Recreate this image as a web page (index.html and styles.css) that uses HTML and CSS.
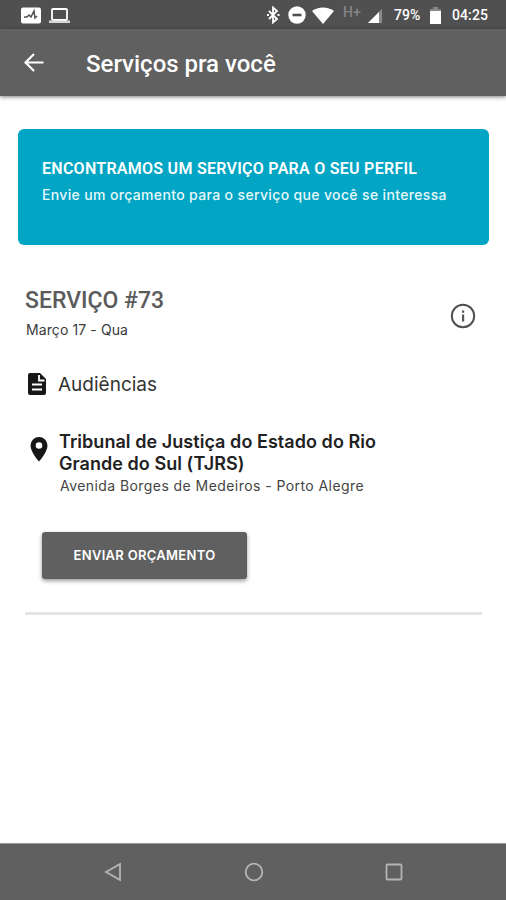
FILE: index.html
```html
<!DOCTYPE html>
<html lang="pt-BR">
<head>
<meta charset="utf-8">
<title>Serviços pra você</title>
<link rel="stylesheet" href="styles.css">
</head>
<body>
<div class="status">
  <svg class="activity" width="20" height="17" viewBox="0 0 20 17"><rect width="20" height="16" y=".5" rx="2" fill="#fff"/><path d="M3 10h3l2-2 2 2 3-6 1 7 2-2" fill="none" stroke="#505050" stroke-width="1.5"/></svg>
  <svg class="laptop" width="22" height="17" viewBox="0 0 22 17"><rect x="3" y="2" width="15" height="11" rx="1" fill="none" stroke="#fff" stroke-width="1.8"/><path d="M0 13.500h21v2.500H0z" fill="#d8d8d8"/></svg>
  <svg class="bluetooth" width="13" height="18" viewBox="0 0 13 18"><path d="M2 5l8 8-4 3.500V1.500L10 5l-8 8" fill="none" stroke="#fff" stroke-width="1.800"/><path d="M0 8h2v2H0zM10.500 8h2v2h-2z" fill="#fff"/></svg>
  <svg class="dnd" width="18" height="18" viewBox="0 0 18 18"><circle cx="9" cy="9" r="8.700" fill="#fff"/><path d="M4.500 7.700h9v2.600h-9z" fill="#505050"/></svg>
  <svg class="wifi" width="22" height="17" viewBox="0 0 22 17"><path d="M0 4C6-.8 16-.8 22 4L11 17z" fill="#fff"/></svg>
  <span class="network">H+</span>
  <svg class="signal" width="15" height="14" viewBox="0 0 15 14"><path d="M14 0v14H0z" fill="#8b8b8b"/><path d="M11 3V14H0z" fill="#fff"/></svg>
  <span class="percent">79%</span>
  <svg class="battery" width="11" height="17" viewBox="0 0 11 17"><path d="M3 0h5v2h3v3H0V2h3z" fill="#888"/><path d="M0 4h11v13H0z" fill="#fff"/></svg>
  <span class="clock">04:25</span>
</div>
<header class="appbar">
  <svg width="20" height="20" viewBox="0 0 20 20"><path d="M10 1L1.500 9.500 10 18M1.500 9.500H19.500" fill="none" stroke="#fff" stroke-width="2.200"/></svg>
  <h1>Serviços pra você</h1>
</header>
<main>
  <section class="banner">
    <h2>ENCONTRAMOS UM SERVIÇO PARA O SEU PERFIL</h2>
    <p>Envie um orçamento para o serviço que você se interessa</p>
  </section>
  <article class="service">
    <div class="heading">
      <div>
        <h3>SERVIÇO #73</h3>
        <p class="date">Março 17 - Qua</p>
      </div>
      <svg width="26" height="26" viewBox="0 0 26 26"><circle cx="13" cy="13" r="11.200" fill="none" stroke="#505050" stroke-width="2"/><path d="M12 7.500h2.200v2.200H12zM12 11.500h2.200v7H12z" fill="#555"/></svg>
    </div>
    <div class="kind">
      <svg width="18" height="22" viewBox="0 0 18 22"><path d="M2 0h10l6 6v14a2 2 0 0 1-2 2H2a2 2 0 0 1-2-2V2a2 2 0 0 1 2-2z" fill="#171717"/><path d="M11 2v5.500h5.500M4 11.500h10M4 16.500h10" fill="none" stroke="#fff" stroke-width="1.800"/></svg>
      <span>Audiências</span>
    </div>
    <div class="place">
      <svg width="18" height="25" viewBox="0 0 18 25"><path fill-rule="evenodd" d="M9 0a8.500 8.500 0 0 0-8.500 8.500C.5 15 9 24.500 9 24.500S17.500 15 17.500 8.500A8.500 8.500 0 0 0 9 0zm0 5.200a3.300 3.300 0 1 1 0 6.600 3.300 3.300 0 0 1 0-6.600z" fill="#171717"/></svg>
      <div>
        <h4>Tribunal de Justiça do Estado do Rio<br>Grande do Sul (TJRS)</h4>
        <p>Avenida Borges de Medeiros - Porto Alegre</p>
      </div>
    </div>
    <button type="button">ENVIAR ORÇAMENTO</button>
    <hr>
  </article>
</main>
<nav>
  <svg width="18" height="20" viewBox="0 0 18 20"><path d="M16 2v16L2 10z" fill="none" stroke="#b5b5b5" stroke-width="1.800"/></svg>
  <svg width="20" height="20" viewBox="0 0 20 20"><circle cx="10" cy="10" r="8.300" fill="none" stroke="#b5b5b5" stroke-width="1.800"/></svg>
  <svg width="18" height="18" viewBox="0 0 18 18"><rect x="1.500" y="1.500" width="15" height="15" rx="1" fill="none" stroke="#b5b5b5" stroke-width="1.800"/></svg>
</nav>
</body>
</html>
```
FILE: styles.css
```css
* { box-sizing: border-box; }
body { margin: 0; width: 506px; height: 900px; display: flex; flex-direction: column; background: #fff; color: #222; font-family: Inter, "Open Sans", sans-serif; overflow: hidden; }
h1, h2, h3, h4, p { margin: 0; white-space: nowrap; }
svg { display: block; flex: none; }
.status { height: 29px; flex: none; display: flex; align-items: center; background: #505050; color: #fff; padding: 1px 0 0 21px; font: 500 14px/28px Roboto, sans-serif; }
.laptop { margin-left: 8px; }
.bluetooth { margin-left: 196px; }
.dnd { margin-left: 8px; }
.wifi { margin-left: 6px; }
.network { color: #858585; font-size: 14px; line-height: 20px; width: 19px; margin: -6px 0 0 9px; }
.signal { margin: 2px 0 0 6px; }
.percent { margin-left: 11px; width: 27px; }
.battery { margin-left: 9px; }
.clock { margin-left: 11px; letter-spacing: 0.1px; }
.appbar { height: 67px; flex: none; display: flex; align-items: center; padding-left: 24px; background: #606060; color: #fff; box-shadow: 0 1px 4px rgba(0,0,0,.5); }
.appbar h1 { margin: 2px 0 0 42px; font: 500 24px/30px Roboto, sans-serif; }
main { flex: 1; padding: 33px 17px 0 18px; }
.banner { height: 116px; border-radius: 6px; background: #02a5c3; color: #fff; padding: 28px 24px; }
.banner h2 { font: 600 16px/24px Roboto, sans-serif; letter-spacing: 0.27px; }
.banner p { font-size: 14px; font-weight: 500; line-height: 20px; margin-top: 4px; color: #e6f8fb; letter-spacing: 0.35px; }
.service { padding: 42px 7px 0; }
.heading { display: flex; justify-content: space-between; padding-right: 6px; height: 57px; }
.heading svg { margin-top: 16px; }
.heading h3 { font: 500 23px/28px Roboto, sans-serif; color: #5b5b5b; }
.date { margin: 6px 0 0 1px; font-size: 14px; line-height: 18px; color: #3a3a3a; letter-spacing: 0.1px; }
.kind { display: flex; align-items: center; height: 26px; margin-top: 27px; padding-left: 3px; font-size: 19px; color: #333; }
.kind span { margin-left: 12px; }
.place { display: flex; margin-top: 34px; padding-left: 5px; }
.place svg { margin-top: 6px; }
.place > div { margin-left: 11px; }
.place h4 { font-size: 18px; font-weight: 600; line-height: 22px; color: #222; letter-spacing: 0.05px; }
.place p { margin-left: 1px; font-size: 14px; line-height: 21px; color: #444; letter-spacing: 0.43px; }
button { display: block; width: 205px; height: 47px; margin: 36px 0 0 17px; padding: 0 0 1px; border: 0; border-radius: 3px; background: #606060; color: #fff; font: 600 13px/20px Inter, sans-serif; letter-spacing: 0.3px; box-shadow: 0 2px 4px rgba(0,0,0,.4); white-space: nowrap; }
hr { height: 3px; margin: 33px 0 0; border: 0; background: #e4e4e4; }
nav { height: 57px; flex: none; display: flex; justify-content: space-between; align-items: center; padding: 0 103px 0 104px; background: #606060; border-top: 1px solid #999; }
```
